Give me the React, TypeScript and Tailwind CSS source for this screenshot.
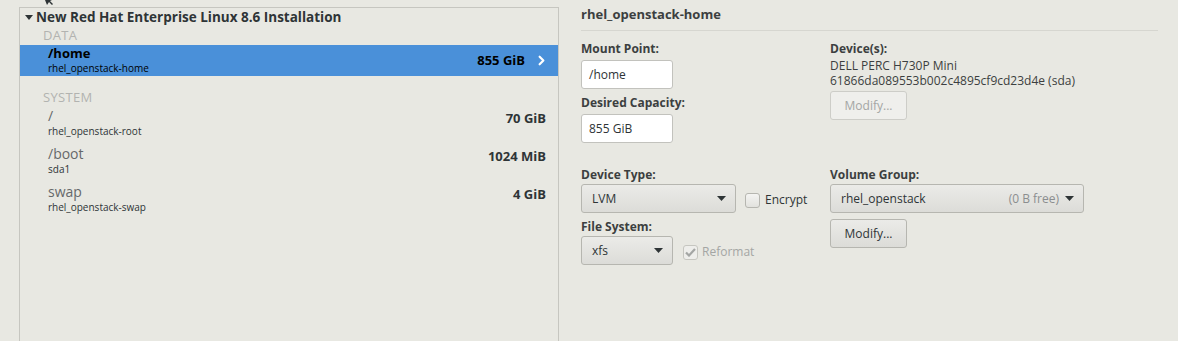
import { ChevronRight } from "lucide-react";

type Mount = { path: string; device: string; size: string };

const system: Mount[] = [
  { path: "/", device: "rhel_openstack-root", size: "70 GiB" },
  { path: "/boot", device: "sda1", size: "1024 MiB" },
  { path: "swap", device: "rhel_openstack-swap", size: "4 GiB" },
];

function Caret() {
  return (
    <svg width="9" height="5" viewBox="0 0 9 5" className="fill-[#2e3436]">
      <path d="M0 0h9L4.5 5z" />
    </svg>
  );
}

function Dropdown({ value, extra, width }: { value: string; extra?: string; width: string }) {
  return (
    <div
      className={`${width} flex h-[29px] items-center rounded-[3px] border border-[#b6b6b0] bg-gradient-to-b from-[#ebebe8] to-[#dcdcd8] pl-[10px] pr-[9px] text-[12px] text-[#2e3436]`}
    >
      <span className="flex-1">{value}</span>
      {extra && <span className="mr-[6px] text-[#8b8e8f]">{extra}</span>}
      <Caret />
    </div>
  );
}

function Button({ label, disabled }: { label: string; disabled?: boolean }) {
  return (
    <div
      className={
        disabled
          ? "flex h-[29px] w-[77px] items-center justify-center rounded-[3px] border border-[#cdcdc8] bg-[#efefec] text-[12px] text-[#a4a6a4]"
          : "flex h-[29px] w-[77px] items-center justify-center rounded-[3px] border border-[#b6b6b0] bg-gradient-to-b from-[#ebebe8] to-[#dcdcd8] text-[12px] text-[#2e3436]"
      }
    >
      {label}
    </div>
  );
}

function Field({ label, value }: { label: string; value: string }) {
  return (
    <div className="flex flex-col">
      <span className="h-[18px] text-[12px] font-bold leading-[18px] text-[#3c3f40]">{label}</span>
      <div className="mt-[2px] flex h-[29px] w-[92px] items-center rounded-[3px] border border-[#c2c2bd] bg-white px-[7px] text-[12px] text-[#2e3436]">
        {value}
      </div>
    </div>
  );
}

export default function App() {
  return (
    <div
      className="relative flex h-[341px] w-[1178px] overflow-hidden bg-[#e8e8e2] text-[#2e3436]"
      style={{ fontFamily: '"Open Sans", "Noto Sans", sans-serif' }}
    >
      {/* bit of the mouse pointer peeking in at the top */}
      <svg width="10" height="6" viewBox="0 0 10 6" className="absolute left-[44px] top-0">
        <path d="M1 0 L3 5 L5 2 L8 5 L9 4 L6 1 L8 0z" fill="#2e3436" />
      </svg>

      {/* left: mount point list */}
      <div className="ml-[19px] mt-[7px] h-[400px] w-[540px] border border-[#c6c6c0]">
        <div className="flex h-[19px] items-center pl-[5px] text-[13.5px] font-bold">
          <svg width="8" height="5" viewBox="0 0 8 5" className="mr-[3px] fill-[#2e3436]">
            <path d="M0 0h8L4 5z" />
          </svg>
          New Red Hat Enterprise Linux 8.6 Installation
        </div>
        <div className="h-[18px] pl-[23px] text-[13px] leading-[16px] tracking-[0.3px] text-[#b2b3b0]">DATA</div>

        <div className="flex h-[31px] items-center bg-[#4a90d9] pl-[28px] pr-[9px] text-black">
          <div className="flex flex-1 flex-col">
            <span className="text-[13px] font-bold leading-[15px]">/home</span>
            <span className="text-[10px] leading-[14px]">rhel_openstack-home</span>
          </div>
          <span className="mr-[9px] text-[13px] font-bold">855 GiB</span>
          <ChevronRight size={15} strokeWidth={3.5} color="white" />
        </div>

        <div className="mt-[13px] h-[18px] pl-[23px] text-[13px] leading-[16px] tracking-[0.3px] text-[#b2b3b0]">SYSTEM</div>

        {system.map((m) => (
          <div key={m.path} className="flex h-[38px] items-start pl-[28px] pr-[12px]">
            <div className="flex flex-1 flex-col">
              <span className="text-[14px] leading-[18px] text-[#66686a]">{m.path}</span>
              <span className="text-[10px] leading-[13px]">{m.device}</span>
            </div>
            <span className="mt-[2px] text-[13px] font-bold leading-[18px]">{m.size}</span>
          </div>
        ))}
      </div>

      {/* right: details of the selected mount */}
      <div className="ml-[22px] mr-[20px] flex flex-1 flex-col">
        <div className="flex h-[31px] items-center border-b border-[#d6d6d0] text-[13px] font-bold text-[#3c3f40]">
          rhel_openstack-home
        </div>

        <div className="mt-[9px] flex">
          <div className="flex w-[249px] flex-col gap-[5px]">
            <Field label="Mount Point:" value="/home" />
            <Field label="Desired Capacity:" value="855 GiB" />
          </div>
          <div className="flex flex-col text-[12px]">
            <span className="h-[18px] font-bold leading-[18px] text-[#3c3f40]">Device(s):</span>
            <span className="leading-[15px] text-[#3c3f40]">DELL PERC H730P Mini</span>
            <span className="leading-[15px] text-[#3c3f40]">61866da089553b002c4895cf9cd23d4e (sda)</span>
            <div className="mt-[3px]">
              <Button label="Modify..." disabled />
            </div>
          </div>
        </div>

        <div className="mt-[23px] flex">
          <div className="flex w-[249px] flex-col">
            <span className="h-[18px] text-[12px] font-bold leading-[18px] text-[#3c3f40]">Device Type:</span>
            <div className="flex items-center">
              <Dropdown value="LVM" width="w-[155px]" />
              <div className="ml-[9px] mt-[3px] h-[15px] w-[15px] rounded-[3px] border border-[#b6b6b0] bg-gradient-to-b from-[#f4f4f2] to-[#e2e2de]" />
              <span className="ml-[5px] mt-[3px] text-[12px]">Encrypt</span>
            </div>
            <span className="mt-[5px] h-[18px] text-[12px] font-bold leading-[18px] text-[#3c3f40]">File System:</span>
            <div className="flex items-center">
              <Dropdown value="xfs" width="w-[92px]" />
              <div className="ml-[10px] mt-[3px] flex h-[15px] w-[15px] items-center justify-center rounded-[3px] border border-[#c6c6c0] bg-[#eeeeeb]">
                <svg width="11" height="9" viewBox="0 0 11 9">
                  <path d="M1 4.5 L4 7.5 L10 1" stroke="#a4a6a4" strokeWidth="2.2" fill="none" />
                </svg>
              </div>
              <span className="ml-[4px] mt-[3px] text-[12px] text-[#a4a6a4]">Reformat</span>
            </div>
          </div>
          <div className="flex flex-col">
            <span className="h-[18px] text-[12px] font-bold leading-[18px] text-[#3c3f40]">Volume Group:</span>
            <div>
              <Dropdown value="rhel_openstack" extra="(0 B free)" width="w-[254px]" />
            </div>
            <div className="mt-[6px]">
              <Button label="Modify..." />
            </div>
          </div>
        </div>
      </div>
    </div>
  );
}
